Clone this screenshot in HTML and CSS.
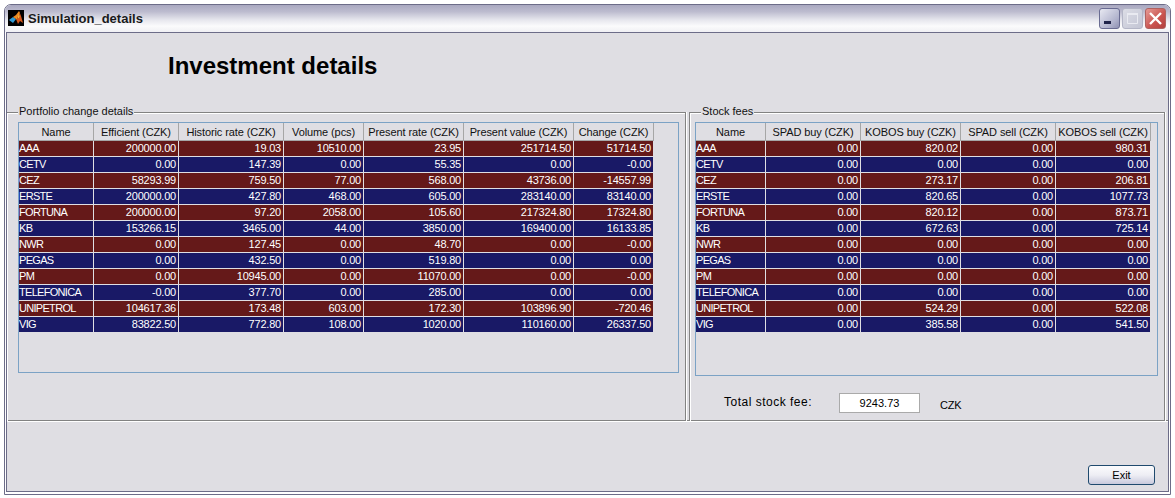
FILE: index.html
```html
<!DOCTYPE html>
<html lang="en">
<head>
    <meta charset="UTF-8">
    <meta name="viewport" content="width=device-width, initial-scale=1.0">
    <title>Simulation_details</title>
    <link rel="stylesheet" href="styles.css">
</head>
<body>
    <div class="window">
        <div class="titlebar">
            <svg class="app-icon" width="16" height="16" viewBox="0 0 16 16">
                <rect width="16" height="16" fill="#000"/>
                <path d="M1 10 L5 7 L8 9 L5 13 Z" fill="#2f9bd6"/>
                <path d="M5 7 L8 5 L11 1 L12 3 L9 9 L8 9 Z" fill="#ee8a22"/>
                <path d="M11 1 L13 6 L15 13 L12 11 L10 14 L8 9 L9 9 L12 3 Z" fill="#d4561a"/>
                <path d="M11 3 L11.5 7 L9.5 9 Z" fill="#f8c040"/>
            </svg>
            <span class="title-text">Simulation_details</span>
            <div class="win-buttons">
                <div class="win-btn btn-min"><svg width="21" height="21" viewBox="0 0 21 21"><rect x="5" y="13" width="7" height="3" fill="#20244a"/></svg></div>
                <div class="win-btn btn-max"><svg width="21" height="21" viewBox="0 0 21 21"><path d="M5.5 5.5 H15.5 V15.5 H5.5 Z" fill="none" stroke="#e9eaf1"/><rect x="5" y="5" width="11" height="2" fill="#e9eaf1"/></svg></div>
                <div class="win-btn btn-close"><svg width="21" height="21" viewBox="0 0 21 21"><path d="M5 5 L16 16 M16 5 L5 16" stroke="#fff" stroke-width="2.4"/></svg></div>
            </div>
        </div>
        <div class="content">
            <div class="main-area">
                <h1>Investment details</h1>
                <div class="panels">
                    <fieldset class="panel panel-left">
                        <legend>Portfolio change details</legend>
                        <div class="table-box box-left">
                            <table class="grid grid-left">
                                <thead>
                                    <tr><th>Name</th><th>Efficient (CZK)</th><th>Historic rate (CZK)</th><th>Volume (pcs)</th><th>Present rate (CZK)</th><th>Present value (CZK)</th><th>Change (CZK)</th></tr>
                                </thead>
                                <tbody>
                                    <tr><td>AAA</td><td>200000.00</td><td>19.03</td><td>10510.00</td><td>23.95</td><td>251714.50</td><td>51714.50</td></tr>
                                    <tr><td>CETV</td><td>0.00</td><td>147.39</td><td>0.00</td><td>55.35</td><td>0.00</td><td>-0.00</td></tr>
                                    <tr><td>CEZ</td><td>58293.99</td><td>759.50</td><td>77.00</td><td>568.00</td><td>43736.00</td><td>-14557.99</td></tr>
                                    <tr><td>ERSTE</td><td>200000.00</td><td>427.80</td><td>468.00</td><td>605.00</td><td>283140.00</td><td>83140.00</td></tr>
                                    <tr><td>FORTUNA</td><td>200000.00</td><td>97.20</td><td>2058.00</td><td>105.60</td><td>217324.80</td><td>17324.80</td></tr>
                                    <tr><td>KB</td><td>153266.15</td><td>3465.00</td><td>44.00</td><td>3850.00</td><td>169400.00</td><td>16133.85</td></tr>
                                    <tr><td>NWR</td><td>0.00</td><td>127.45</td><td>0.00</td><td>48.70</td><td>0.00</td><td>-0.00</td></tr>
                                    <tr><td>PEGAS</td><td>0.00</td><td>432.50</td><td>0.00</td><td>519.80</td><td>0.00</td><td>0.00</td></tr>
                                    <tr><td>PM</td><td>0.00</td><td>10945.00</td><td>0.00</td><td>11070.00</td><td>0.00</td><td>-0.00</td></tr>
                                    <tr><td>TELEFONICA</td><td>-0.00</td><td>377.70</td><td>0.00</td><td>285.00</td><td>0.00</td><td>0.00</td></tr>
                                    <tr><td>UNIPETROL</td><td>104617.36</td><td>173.48</td><td>603.00</td><td>172.30</td><td>103896.90</td><td>-720.46</td></tr>
                                    <tr><td>VIG</td><td>83822.50</td><td>772.80</td><td>108.00</td><td>1020.00</td><td>110160.00</td><td>26337.50</td></tr>
                                </tbody>
                            </table>
                        </div>
                    </fieldset>
                    <fieldset class="panel panel-right">
                        <legend>Stock fees</legend>
                        <div class="table-box box-right">
                            <table class="grid grid-right">
                                <thead>
                                    <tr><th>Name</th><th>SPAD buy (CZK)</th><th>KOBOS buy (CZK)</th><th>SPAD sell (CZK)</th><th>KOBOS sell (CZK)</th></tr>
                                </thead>
                                <tbody>
                                    <tr><td>AAA</td><td>0.00</td><td>820.02</td><td>0.00</td><td>980.31</td></tr>
                                    <tr><td>CETV</td><td>0.00</td><td>0.00</td><td>0.00</td><td>0.00</td></tr>
                                    <tr><td>CEZ</td><td>0.00</td><td>273.17</td><td>0.00</td><td>206.81</td></tr>
                                    <tr><td>ERSTE</td><td>0.00</td><td>820.65</td><td>0.00</td><td>1077.73</td></tr>
                                    <tr><td>FORTUNA</td><td>0.00</td><td>820.12</td><td>0.00</td><td>873.71</td></tr>
                                    <tr><td>KB</td><td>0.00</td><td>672.63</td><td>0.00</td><td>725.14</td></tr>
                                    <tr><td>NWR</td><td>0.00</td><td>0.00</td><td>0.00</td><td>0.00</td></tr>
                                    <tr><td>PEGAS</td><td>0.00</td><td>0.00</td><td>0.00</td><td>0.00</td></tr>
                                    <tr><td>PM</td><td>0.00</td><td>0.00</td><td>0.00</td><td>0.00</td></tr>
                                    <tr><td>TELEFONICA</td><td>0.00</td><td>0.00</td><td>0.00</td><td>0.00</td></tr>
                                    <tr><td>UNIPETROL</td><td>0.00</td><td>524.29</td><td>0.00</td><td>522.08</td></tr>
                                    <tr><td>VIG</td><td>0.00</td><td>385.58</td><td>0.00</td><td>541.50</td></tr>
                                </tbody>
                            </table>
                        </div>
                        <div class="total-row">
                            <span class="total-label">Total stock fee:</span>
                            <div class="total-value">9243.73</div>
                            <span class="total-unit">CZK</span>
                        </div>
                    </fieldset>
                </div>
            </div>
            <div class="footer">
                <button class="exit-button">Exit</button>
            </div>
        </div>
    </div>
</body>
</html>
```

FILE: styles.css
```css
* {
    box-sizing: border-box;
}
html, body {
    margin: 0;
    padding: 0;
    background: #fff;
}
body {
    font-family: "Liberation Sans", Arial, sans-serif;
    font-size: 11px;
    color: #000;
    width: 1175px;
    height: 498px;
    overflow: hidden;
}
.window {
    margin: 4px 0 0 4px;
    width: 1167px;
    height: 491px;
    border: 1px solid #6c6c88;
    border-radius: 7px 7px 0 0;
    background: #fff;
    padding: 0 1px 2px 1px;
}
.titlebar {
    height: 27px;
    display: flex;
    align-items: center;
    padding: 0 3px 1px 3px;
    border-radius: 6px 6px 0 0;
    background: linear-gradient(to bottom, #a9a8c0 0%, #bdbccf 25%, #e6e6ed 55%, #fbfbfc 78%, #f0f0f4 100%);
    margin: 0 -1px;
}
.app-icon {
    flex: none;
}
.title-text {
    margin-left: 4px;
    font-size: 13px;
    font-weight: bold;
    color: #1a1a1a;
    flex: 1;
}
.win-buttons {
    display: flex;
    gap: 2px;
    margin-right: 1px;
}
.win-btn {
    width: 21px;
    height: 21px;
    border-radius: 3px;
}
.win-btn svg {
    display: block;
    margin: -1px;
}
.btn-min {
    border: 1px solid #6a6c92;
    background: linear-gradient(135deg, #e8e9f2, #b0b2cc 70%, #8e90b2);
}
.btn-max {
    border: 1px solid #b3b5c6;
    background: linear-gradient(135deg, #dcdde6, #c3c5d4);
}
.btn-close {
    border: 1px solid #b0625f;
    background: linear-gradient(135deg, #e69a94, #c9524e 60%, #b23f3d);
}
.content {
    height: 460px;
    background: #dfdee3;
    border: 1px solid #6c6c88;
    display: flex;
    flex-direction: column;
}
.main-area {
    height: 388px;
    border-bottom: 1px solid #828282;
    box-shadow: 0 1px 0 #fff;
}
h1 {
    margin: 0;
    height: 73px;
    padding: 19px 0 0 161px;
    font-size: 24px;
    line-height: 28px;
    font-weight: bold;
}
.panels {
    display: flex;
    gap: 3px;
}
.panel {
    margin: 0;
    padding: 0;
    min-width: 0;
    height: 315px;
    border: 1px solid #828282;
    box-shadow: inset 1px 1px 0 #fff, 1px 0 0 #fff;
}
.panel legend {
    margin-left: 11px;
    padding: 0 1px;
    height: 13px;
    line-height: 11px;
    font-size: 11px;
    background: #dfdee3;
    color: #111;
}
.panel-left {
    width: 679px;
    border-left: none;
    border-bottom: none;
}
.panel-right {
    width: 476px;
    border-bottom: none;
}
.table-box {
    border: 1px solid #7ba2c5;
    margin-top: 3px;
}
.box-left {
    width: 661px;
    height: 251px;
    margin-left: 11px;
}
.box-right {
    width: 463px;
    height: 254px;
    margin-left: 5px;
}
.grid {
    border-collapse: separate;
    border-spacing: 0;
    table-layout: fixed;
}
.grid-left {
    width: 635px;
}
.grid-right {
    width: 455px;
}
.grid-left th:nth-child(1) { width: 75px; }
.grid-left th:nth-child(2) { width: 85px; }
.grid-left th:nth-child(3) { width: 105px; }
.grid-left th:nth-child(4) { width: 80px; }
.grid-left th:nth-child(5) { width: 100px; }
.grid-left th:nth-child(6) { width: 110px; }
.grid-left th:nth-child(7) { width: 80px; }
.grid-right th:nth-child(1) { width: 70px; }
.grid-right th:nth-child(2) { width: 95px; }
.grid-right th:nth-child(3) { width: 100px; }
.grid-right th:nth-child(4) { width: 95px; }
.grid-right th:nth-child(5) { width: 95px; }
.grid th {
    height: 18px;
    padding: 0;
    font-weight: normal;
    font-size: 11px;
    letter-spacing: -0.1px;
    text-align: center;
    white-space: nowrap;
    background: #dfdee3;
    color: #111;
    border-right: 1px solid #a6a6a6;
    border-bottom: 1px solid #a6a6a6;
}
.grid td {
    height: 16px;
    padding: 0 2px 0 1px;
    font-size: 11px;
    letter-spacing: -0.2px;
    line-height: 15px;
    text-align: right;
    white-space: nowrap;
    color: #fff;
    border-right: 1px solid #dfdee3;
    border-bottom: 1px solid #dfdee3;
}
.grid td:first-child {
    text-align: left;
    padding-left: 0;
    letter-spacing: -0.7px;
}
.grid tbody tr:nth-child(odd) td {
    background: #651919;
}
.grid tbody tr:nth-child(even) td {
    background: #191966;
}
.total-row {
    display: flex;
    align-items: flex-start;
    margin-top: 17px;
}
.total-label {
    margin-left: 34px;
    width: 115px;
    font-size: 12px;
    letter-spacing: 0.5px;
    line-height: 14px;
    margin-top: 2px;
}
.total-value {
    width: 81px;
    height: 20px;
    line-height: 18px;
    background: #fff;
    border: 1px solid #aaa;
    text-align: center;
}
.total-unit {
    margin-left: 20px;
    margin-top: 5px;
    line-height: 14px;
    letter-spacing: -0.2px;
}
.footer {
    flex: 1;
    display: flex;
    justify-content: flex-end;
    align-items: flex-start;
    padding: 44px 13px 0 0;
}
.exit-button {
    width: 67px;
    height: 20px;
    padding: 0;
    font-family: "Liberation Sans", Arial, sans-serif;
    font-size: 11px;
    color: #000;
    border: 1px solid #1f4a6e;
    border-radius: 3px;
    background: linear-gradient(to bottom, #fbfbfd 0%, #eeeef4 50%, #c9cadd 100%);
}
```
